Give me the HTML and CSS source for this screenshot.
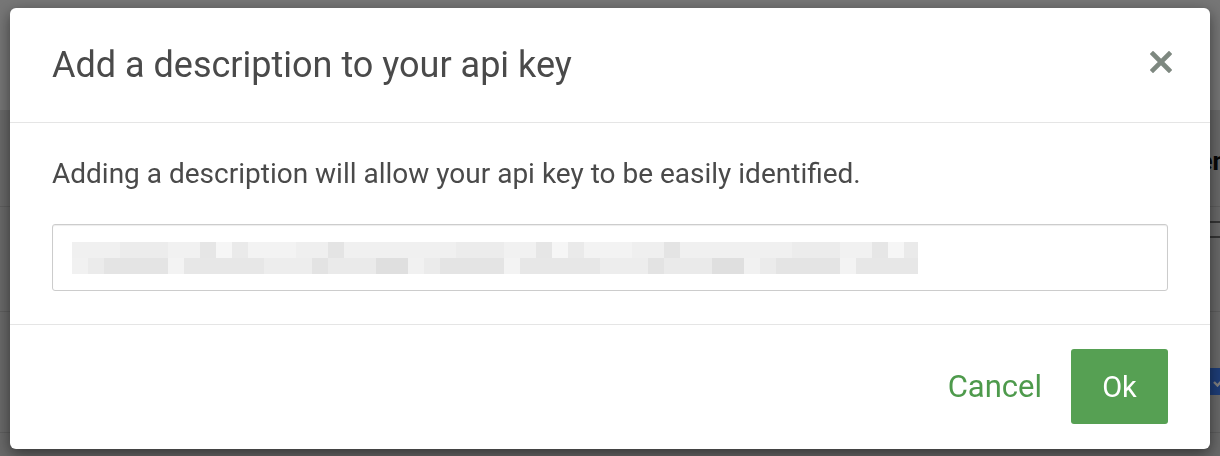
FILE: index.html
```html
<!DOCTYPE html>
<html lang="en">
<head>
  <meta charset="UTF-8" />
  <meta name="viewport" content="width=device-width, initial-scale=1.0" />
  <title>API keys</title>
  <link rel="stylesheet" href="styles.css">
</head>
<body>

  <div class="page">
    <div class="topbar"></div>
    <div class="row row-title">
      <span class="page-heading">Token</span>
    </div>
    <div class="row row-table">
      <div class="table-head"></div>
    </div>
    <div class="row row-item">
      <span class="check">
        <svg width="12" height="10" viewBox="0 0 12 10">
          <path d="M1 5 L4.5 8.5 L11 1.5" stroke="#fff" stroke-width="2.4" fill="none" />
        </svg>
      </span>
    </div>
    <div class="row row-last"></div>
  </div>

  <div class="backdrop"></div>

  <div class="modal">
    <div class="modal-header">
      <h4 class="modal-title">Add a description to your api key</h4>
      <button class="close" aria-label="Close">
        <svg width="22" height="22" viewBox="0 0 22 22">
          <path d="M3 3 L19 19 M19 3 L3 19" stroke="#7e8880" stroke-width="4.6" stroke-linecap="square" fill="none" />
        </svg>
      </button>
    </div>
    <div class="modal-body">
      <p>Adding a description will allow your api key to be easily identified.</p>
      <div class="input">
        <span class="blurred"><span class="blur-row one"></span><span class="blur-row two"></span></span>
      </div>
    </div>
    <div class="modal-footer">
      <button class="btn-link">Cancel</button>
      <button class="btn-ok">Ok</button>
    </div>
  </div>

</body>
</html>
```

FILE: styles.css
```css
* {
  box-sizing: border-box;
  margin: 0;
  padding: 0;
}

body {
  font-family: Roboto, 'Noto Sans', sans-serif;
  background: #d2d2d2;
  height: 456px;
  overflow: hidden;
}

/* page behind the dialog */
.page {
  display: flex;
  flex-direction: column;
}

.topbar {
  height: 110px;
  background: #ececec;
}

.row {
  display: flex;
  justify-content: flex-end;
  border-bottom: 1px solid #bcbcbc;
}

.row-title {
  height: 97px;
  align-items: flex-start;
  padding-top: 36px;
}

.page-heading {
  font-size: 26px;
  font-weight: bold;
  color: #111;
  margin-right: -7px;
}

.row-table {
  height: 105px;
  align-items: flex-start;
  padding-top: 14px;
}

.table-head {
  width: 14px;
  height: 17px;
  border-top: 2px solid #6a6a6a;
  border-bottom: 2px solid #6a6a6a;
}

.row-item {
  height: 121px;
  align-items: flex-start;
  padding-top: 56px;
}

.check {
  width: 18px;
  height: 27px;
  margin-right: -8px;
  background: #3b7bf0;
  display: flex;
  align-items: center;
  padding-left: 3px;
}

.row-last {
  flex: 1;
  border: none;
}

.backdrop {
  position: fixed;
  inset: 0;
  background: rgba(0, 0, 0, 0.5);
}

/* dialog */
.modal {
  position: fixed;
  top: 8px;
  left: 10px;
  width: 1200px;
  height: 441px;
  background: #fff;
  border-radius: 6px;
  box-shadow: 0 5px 15px rgba(0, 0, 0, 0.5);
  display: flex;
  flex-direction: column;
}

.modal-header {
  height: 115px;
  padding: 0 38px 0 42px;
  display: flex;
  align-items: center;
  justify-content: space-between;
  border-bottom: 1px solid #e5e5e5;
}

.modal-title {
  font-size: 36px;
  font-weight: normal;
  color: #4a4a4a;
}

.close {
  border: none;
  background: none;
  width: 22px;
  height: 22px;
  display: flex;
  margin-bottom: 6px;
  cursor: pointer;
}

.modal-body {
  padding: 34px 42px 33px 42px;
  border-bottom: 1px solid #e5e5e5;
}

.modal-body p {
  font-size: 28px;
  line-height: 34px;
  color: #4a4a4a;
  margin-bottom: 33px;
}

.input {
  height: 67px;
  border: 1px solid #cccccc;
  border-radius: 3px;
  box-shadow: inset 0 1px 1px rgba(0, 0, 0, 0.075);
  padding: 17px 19px;
}

.blurred {
  display: flex;
  flex-direction: column;
  width: 846px;
}

.blur-row {
  height: 16px;
}

.blur-row.one {
  background: repeating-linear-gradient(90deg,
    #f0f0f0 0 48px, #ececec 48px 96px, #f1f1f1 96px 128px, #e6e6e6 128px 144px,
    #f6f6f6 144px 160px, #eaeaea 160px 176px, #f3f3f3 176px 224px, #efefef 224px 256px,
    #e4e4e4 256px 272px, #f0f0f0 272px 336px);
}

.blur-row.two {
  background: repeating-linear-gradient(90deg,
    #f1f1f1 0 16px, #ebebeb 16px 32px, #e4e4e4 32px 96px, #f3f3f3 96px 112px,
    #e7e7e7 112px 192px, #ededed 192px 240px, #e3e3e3 240px 256px, #eaeaea 256px 304px,
    #dfdfdf 304px 336px);
}

.modal-footer {
  flex: 1;
  display: flex;
  justify-content: flex-end;
  align-items: flex-start;
  padding: 24px 42px 0 0;
}

.btn-link {
  border: none;
  background: none;
  color: #4e9a4c;
  font-family: inherit;
  font-size: 31px;
  height: 75px;
  margin-right: 29px;
  cursor: pointer;
}

.btn-ok {
  border: none;
  border-radius: 3px;
  background: #56a053;
  color: #fff;
  font-family: inherit;
  font-size: 29px;
  width: 97px;
  height: 75px;
  cursor: pointer;
}
```
